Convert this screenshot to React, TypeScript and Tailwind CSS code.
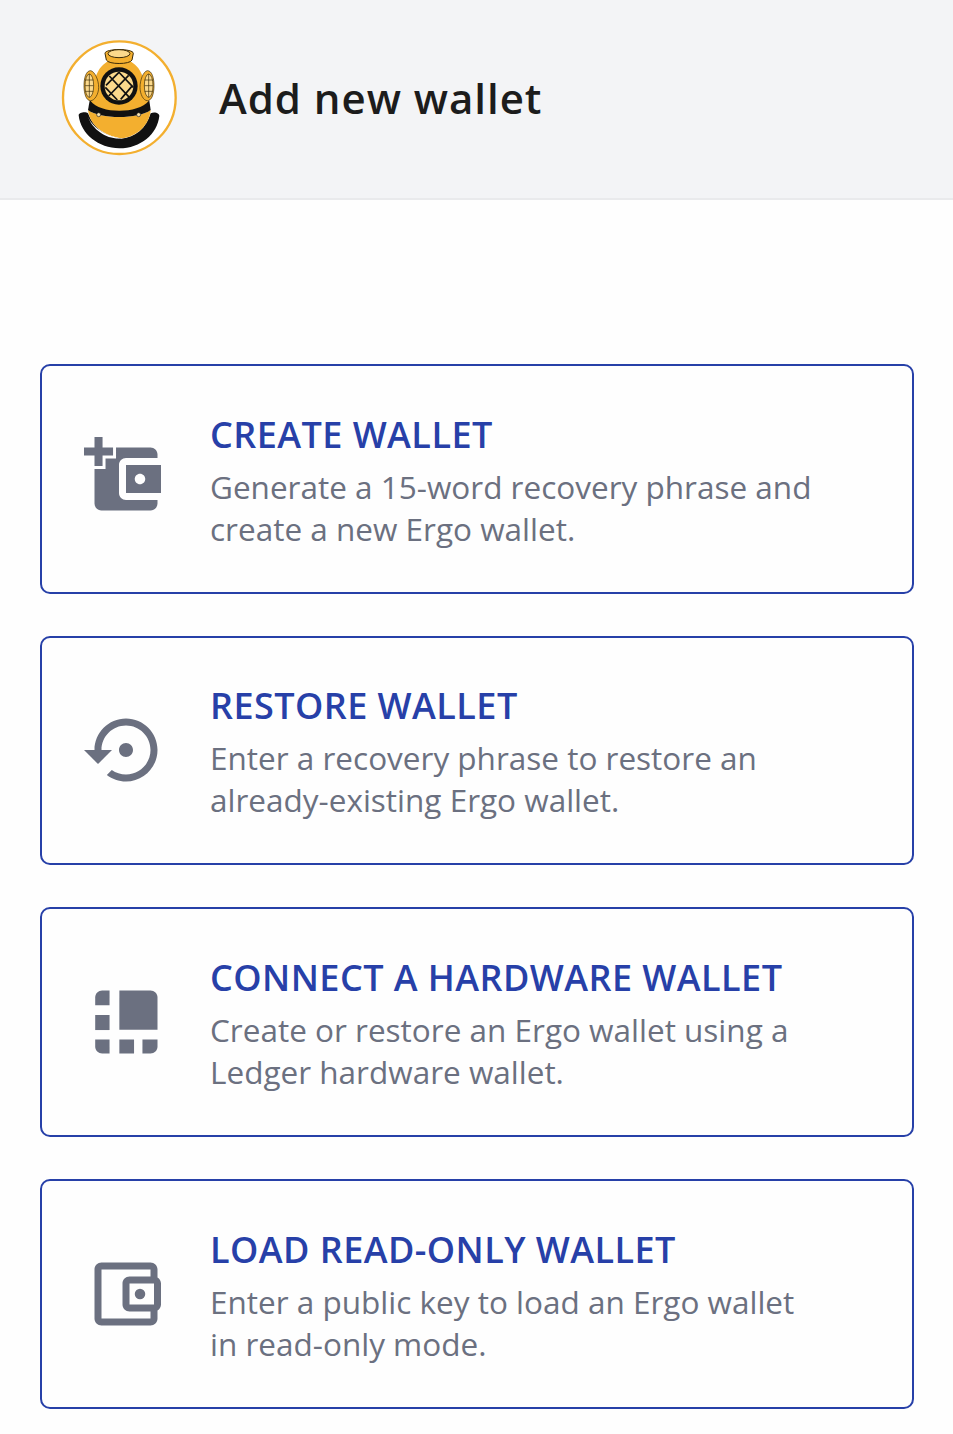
const FONT = "font-['Open_Sans','Noto_Sans',sans-serif]";

function Logo() {
  return (
    <svg width="140" height="135" viewBox="0 0 420 405" className="shrink-0">
      <circle cx="208" cy="203" r="169" fill="#fff" stroke="#f3af2f" strokeWidth="7" />
      {/* black crescent under the collar */}
      <path d="M86 256 C86 248 106 244 114 250 C130 296 170 322 214 326 C256 322 288 296 302 250 C312 244 328 248 328 258 C322 312 272 355 208 355 C146 355 92 312 86 256Z" fill="#111" />
      {/* collar */}
      <path d="M114 240 C150 268 265 268 302 240 C298 285 262 320 214 325 C190 322 165 312 148 298 C128 284 117 262 114 240Z" fill="#f3af2f" />
      <path d="M114 260 C126 290 166 319 214 325 C172 329 128 300 114 260Z" fill="#fff" />
      {/* neck band */}
      <path d="M119 212 L114 240 C150 268 265 268 302 240 L298 212Z" fill="#111" />
      {/* dome */}
      <path d="M207 86 C165 86 134 120 134 168 C134 190 128 205 122 213 C150 252 265 252 296 213 C288 205 282 190 282 168 C282 120 250 86 207 86Z" fill="#f3af2f" />
      {/* top ring */}
      <path d="M165 70 C165 55 250 55 250 70 L246 90 C240 104 175 104 169 90Z" fill="#f3af2f" stroke="#3a2a08" strokeWidth="3" />
      <ellipse cx="207" cy="71" rx="33" ry="12" fill="#fbd98c" stroke="#3a2a08" strokeWidth="3" />
      {/* side ports */}
      <path d="M122 122 C134 124 146 150 146 172 C146 192 134 212 122 212 C108 212 102 190 102 167 C102 144 108 122 122 122Z" fill="#f3af2f" stroke="#3a2a08" strokeWidth="2" />
      <ellipse cx="118" cy="167" rx="13" ry="35" fill="#fbd98c" stroke="#3a2a08" strokeWidth="2" />
      <path d="M106 150 H130 M105 167 H131 M106 184 H130 M118 132 V202" stroke="#3a2a08" strokeWidth="2" fill="none" />
      <path d="M292 122 C280 124 270 150 270 172 C270 192 280 212 292 212 C306 212 312 190 312 167 C312 144 306 122 292 122Z" fill="#f3af2f" stroke="#3a2a08" strokeWidth="2" />
      <ellipse cx="296" cy="167" rx="13" ry="35" fill="#fbd98c" stroke="#3a2a08" strokeWidth="2" />
      <path d="M284 150 H308 M283 167 H309 M284 184 H308 M296 132 V202" stroke="#3a2a08" strokeWidth="2" fill="none" />
      {/* front port */}
      <circle cx="207" cy="168" r="56" fill="#111" />
      <circle cx="207" cy="168" r="43" fill="#fbd98c" />
      <path d="M178 138 L238 202 M166 172 L202 210 M206 126 L250 172 M236 136 L176 198 M206 128 L168 166 M248 166 L212 208" stroke="#111" strokeWidth="5" fill="none" />
      {/* rivets */}
      <circle cx="146" cy="254" r="6" fill="#f8e3b0" stroke="#222" strokeWidth="2" />
      <circle cx="266" cy="254" r="6" fill="#f8e3b0" stroke="#222" strokeWidth="2" />
    </svg>
  );
}

function IconCreate() {
  return (
    <svg width="84" height="84" viewBox="0 0 24 24" fill="#6b7080">
      <path d="M21 18v1c0 1.1-.9 2-2 2H5c-1.11 0-2-.9-2-2V5c0-1.1.89-2 2-2h14c1.1 0 2 .9 2 2v1h-9c-1.11 0-2 .9-2 2v8c0 1.1.89 2 2 2h9zm-9-2h10V8H12v8zm4-2.5c-.83 0-1.5-.67-1.5-1.5s.67-1.5 1.5-1.5 1.5.67 1.5 1.5-.67 1.5-1.5 1.5z" />
      <path d="M3 0h2.3v3h3v2.3h-3v3H3v-3H0V3h3z" stroke="#fff" strokeWidth="1.7" paintOrder="stroke" />
    </svg>
  );
}

function IconRestore() {
  return (
    <svg width="84" height="84" viewBox="0 0 24 24" fill="#6b7080">
      <path d="M14 12c0-1.1-.9-2-2-2s-2 .9-2 2 .9 2 2 2 2-.9 2-2zm-2-9c-4.97 0-9 4.03-9 9H0l4 4 4-4H5c0-3.87 3.13-7 7-7s7 3.13 7 7-3.13 7-7 7c-1.51 0-2.91-.49-4.06-1.3l-1.42 1.44C8.04 20.3 9.94 21 12 21c4.97 0 9-4.03 9-9s-4.03-9-9-9z" />
    </svg>
  );
}

function IconHardware() {
  return (
    <svg width="84" height="84" viewBox="0 0 24 24" fill="#6b7080">
      <path d="M5.2 3h2.1v4.2H3.2V5c0-1.1.9-2 2-2z" />
      <path d="M3.2 10h4.1v4.3H3.2z" />
      <path d="M3.2 17h4.1v4H5.2c-1.1 0-2-.9-2-2z" />
      <path d="M10.1 3H19c1.1 0 2 .9 2 2v9.2H10.1z" />
      <path d="M10.1 17h4.2v4h-4.2z" />
      <path d="M16.7 17H21v2c0 1.1-.9 2-2 2h-2.3z" />
    </svg>
  );
}

function IconReadOnly() {
  return (
    <svg width="84" height="84" viewBox="0 0 24 24" fill="#6b7080">
      <path d="M21 7.28V5c0-1.1-.9-2-2-2H5c-1.11 0-2 .9-2 2v14c0 1.1.89 2 2 2h14c1.1 0 2-.9 2-2v-2.28c.59-.35 1-.98 1-1.72V9c0-.74-.41-1.37-1-1.72zM20 9v6h-7V9h7zM5 19V5h14v2h-6c-1.1 0-2 .9-2 2v6c0 1.1.9 2 2 2h6v2H5z" />
      <circle cx="16" cy="12" r="1.5" />
    </svg>
  );
}

const OPTIONS = [
  {
    title: "CREATE WALLET",
    lines: ["Generate a 15-word recovery phrase and", "create a new Ergo wallet."],
    icon: <IconCreate />,
  },
  {
    title: "RESTORE WALLET",
    lines: ["Enter a recovery phrase to restore an", "already-existing Ergo wallet."],
    icon: <IconRestore />,
  },
  {
    title: "CONNECT A HARDWARE WALLET",
    lines: ["Create or restore an Ergo wallet using a", "Ledger hardware wallet."],
    icon: <IconHardware />,
  },
  {
    title: "LOAD READ-ONLY WALLET",
    lines: ["Enter a public key to load an Ergo wallet", "in read-only mode."],
    icon: <IconReadOnly />,
  },
];

export default function App() {
  return (
    <div className={`min-h-[1434px] w-[953px] bg-[#fefefe] ${FONT}`}>
      <header className="flex h-[200px] items-center gap-[29px] border-b-2 border-[#e9eaec] bg-[#f3f4f6] pb-[3px] pl-[50px]">
        <Logo />
        <h1 className="text-[42px] leading-none font-semibold tracking-[0.97px] text-[#1c1c1c]">Add new wallet</h1>
      </header>
      <main className="flex flex-col gap-[42px] pt-[164px] pl-10">
        {OPTIONS.map((o) => (
          <button
            key={o.title}
            type="button"
            className="flex h-[229.67px] w-[874px] items-center rounded-[10px] border-2 border-[#2740a8] pl-[42px] text-left"
          >
            <span className="shrink-0">{o.icon}</span>
            <span className="ml-[42px] block pt-[4px]">
              <span className="block text-[36px] leading-[46px] font-semibold tracking-[0.45px] text-[#2740a8]">{o.title}</span>
              <span className="mt-[8px] block text-[31.5px] leading-[42px] text-[#6b7080]">
                {o.lines.map((l) => (
                  <span key={l} className="block">
                    {l}
                  </span>
                ))}
              </span>
            </span>
          </button>
        ))}
      </main>
    </div>
  );
}
